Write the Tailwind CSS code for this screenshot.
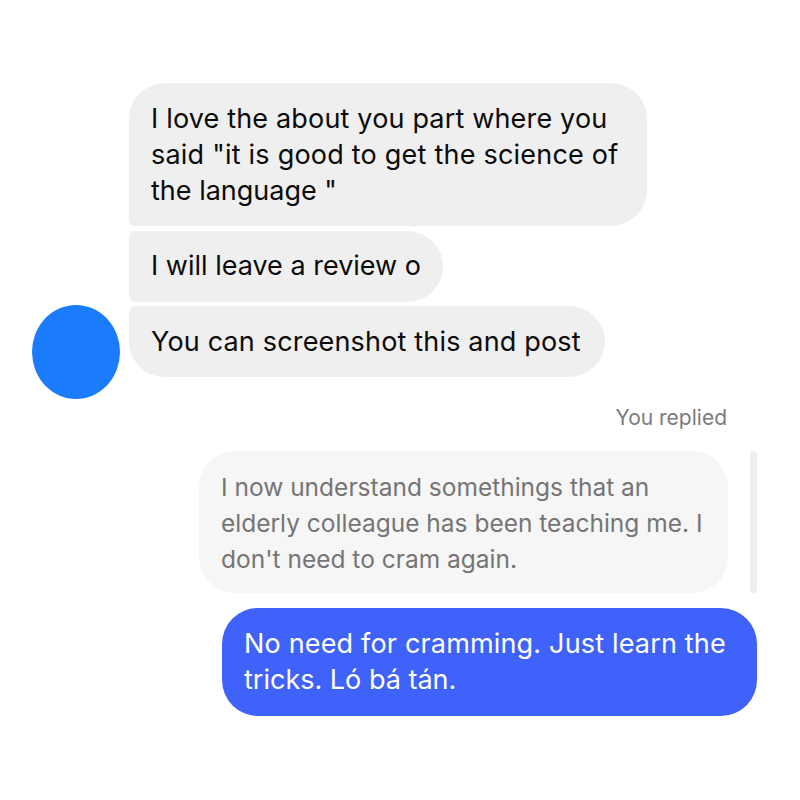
<!DOCTYPE html>
<html>
<head>
<meta charset="utf-8">
<script src="https://cdn.jsdelivr.net/npm/@tailwindcss/browser@4"></script>
</head>
<body class="bg-white">
<div class="w-[800px] h-[800px] overflow-hidden pt-[83px] font-['Inter',sans-serif] text-[27px] leading-[36px] tracking-[0.17px] text-[#0b0b0b]">
  <div class="flex items-end pl-[32px]">
    <div class="w-[88px] h-[94px] rounded-[50%] bg-[#1a7cfa] mb-[-22px] shrink-0"></div>
    <div class="ml-[9px] flex flex-col items-start">
      <div class="w-[518px] h-[143px] bg-[#efefef] rounded-[36px] rounded-bl-[6px] pl-[22px] pt-[18px]">I love the about you part where you<br><span class="tracking-[0.22px]">said "it is good to get the science of</span><br><span class="tracking-normal">the language "</span></div>
      <div class="mt-[5px] w-[314px] h-[71px] bg-[#efefef] rounded-[36px] rounded-l-[6px] pl-[22px] pt-[17px] tracking-normal">I will leave a review o</div>
      <div class="mt-[4px] w-[476px] h-[71px] bg-[#efefef] rounded-[36px] rounded-tl-[6px] pl-[22px] pt-[18px]">You can screenshot this and post</div>
    </div>
  </div>
  <div class="mt-[27px] pr-[73px] text-right text-[21px] leading-[28px] tracking-normal text-[#7b7b7b]">You replied</div>
  <div class="mt-[19px] flex justify-end pr-[43px] gap-[22px]">
    <div class="w-[529px] h-[142px] bg-[#f6f6f6] rounded-[36px] pl-[22px] pt-[18px] text-[#757575] text-[24.5px] tracking-normal">I now understand somethings that an<br>elderly colleague has been teaching me. I<br>don't need to cram again.</div>
    <div class="w-[7px] h-[142px] rounded-full bg-[#efefef]"></div>
  </div>
  <div class="mt-[15px] flex justify-end pr-[43px]">
    <div class="w-[535px] h-[108px] bg-[#3f62fb] rounded-[36px] pl-[22px] pt-[18px] text-white">No need for cramming. Just learn the<br><span class="tracking-normal">tricks. Ló bá tán.</span></div>
  </div>
</div>
</body>
</html>
